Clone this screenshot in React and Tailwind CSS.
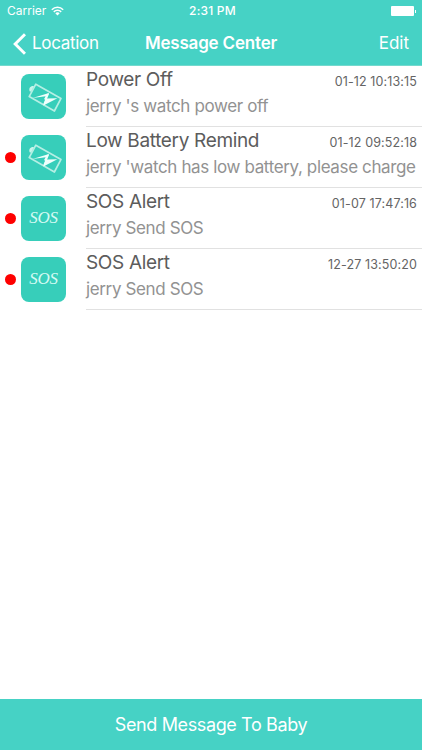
import React from "react";

function BatteryIcon() {
  return (
    <svg viewBox="0 0 45 45" className="size-[45px]" fill="none">
      <path d="M13 12.2C10 11.4 7.3 14 8.6 17.2L10.2 17.8Z" fill="#c9f5ec" />
      <path d="M14.8 10.2L40 24.4L33.4 37L8.2 22.6Z" stroke="#b5efe4" strokeWidth="1.7" strokeLinejoin="round" />
      <path d="M11.5 23.9L28 19L25.6 24.6L36.4 24.2L22.4 31.4L24.4 25.4L23 25.2L24.6 22.2Z" fill="#f0fffc" />
      <path d="M27.4 19.4L22.8 30.8" stroke="#f0fffc" strokeWidth="1.4" />
    </svg>
  );
}

function SosIcon() {
  return (
    <span className="-mt-[3px] font-['Liberation_Serif',serif] text-[17px] leading-none tracking-[-0.3px] text-[#d4faf3] italic">
      SOS
    </span>
  );
}

const messages = [
  { kind: "battery", unread: false, title: "Power Off", time: "01-12 10:13:15", body: "jerry 's watch power off" },
  { kind: "battery", unread: true, title: "Low Battery Remind", time: "01-12 09:52:18", body: "jerry 'watch has low battery, please charge" },
  { kind: "sos", unread: true, title: "SOS Alert", time: "01-07 17:47:16", body: "jerry Send SOS" },
  { kind: "sos", unread: true, title: "SOS Alert", time: "12-27 13:50:20", body: "jerry Send SOS" },
];

function MessageRow({ message }) {
  return (
    <li className="flex h-[61px]">
      <div className="flex w-[86px] shrink-0 items-start pt-2 pl-[5px]">
        <span className={`mt-[17px] size-[11px] rounded-full ${message.unread ? "bg-[#fe0000]" : "bg-transparent"}`} />
        <span className="ml-[5px] flex size-[45px] items-center justify-center rounded-[8px] bg-[#37ceba]">
          {message.kind === "battery" ? <BatteryIcon /> : <SosIcon />}
        </span>
      </div>
      <div className="min-w-0 flex-1 border-b border-[#e1e1e1] pr-[5px] whitespace-nowrap">
        <div className="flex justify-between">
          <h2 className="pt-px text-[19px] leading-[25px] tracking-[-0.34px] text-[#5c5c5c]">{message.title}</h2>
          <time className="-mr-px pt-[8px] pr-px text-[12.5px] leading-4 tracking-[0.12px] text-[#646464]">{message.time}</time>
        </div>
        <p className="pt-[2px] text-[17px] leading-[24px] tracking-[-0.37px] text-[#929292]">{message.body}</p>
      </div>
    </li>
  );
}

export default function App() {
  return (
    <div className="flex h-[750px] w-[422px] flex-col overflow-hidden bg-white font-[Inter,sans-serif]">
      <header className="h-[66px] shrink-0 border-b border-[#74d9cd] bg-[#46d2c5] text-white">
        <div className="grid h-[22px] grid-cols-3 items-center text-[12px] leading-4">
          <div className="flex items-center gap-[5px] pl-[7px]">
            <span>Carrier</span>
            <svg viewBox="0 0 13 10" className="h-[10px] w-[13px]" fill="none" stroke="currentColor" strokeWidth="1.5">
              <path d="M0.8 3.7a8.1 8.1 0 0 1 11.4 0" />
              <path d="M2.8 5.9a5.2 5.2 0 0 1 7.4 0" />
              <path d="M4.3 7.3a3.1 3.1 0 0 1 4.4 0L6.5 9.6Z" fill="currentColor" stroke="none" />
            </svg>
          </div>
          <span className="pl-[3px] text-center font-medium tracking-[0.2px]">2:31 PM</span>
          <div className="flex items-center justify-end pr-[6px]">
            <span className="h-[10px] w-[23px] rounded-[1px] bg-white" />
            <span className="ml-px h-[3px] w-px bg-white" />
          </div>
        </div>
        <nav className="grid h-[43px] grid-cols-[1fr_auto_1fr] items-center text-[17px]">
          <div className="flex items-center pl-[13px]">
            <svg viewBox="0 0 13 22" className="mr-[6px] h-[22px] w-[13px]" fill="none" stroke="currentColor" strokeWidth="3">
              <path d="M12 1.2L2.2 11L12 20.8" />
            </svg>
            <span className="tracking-[-0.3px]">Location</span>
          </div>
          <h1 className="font-semibold tracking-[-0.18px]">Message Center</h1>
          <span className="pr-[13px] text-right">Edit</span>
        </nav>
      </header>
      <ul className="flex-1">
        {messages.map((message, i) => (
          <MessageRow key={i} message={message} />
        ))}
      </ul>
      <button className="h-[51px] shrink-0 bg-[#46d2c5] text-[18px] tracking-[-0.38px] text-white">Send Message To Baby</button>
    </div>
  );
}
